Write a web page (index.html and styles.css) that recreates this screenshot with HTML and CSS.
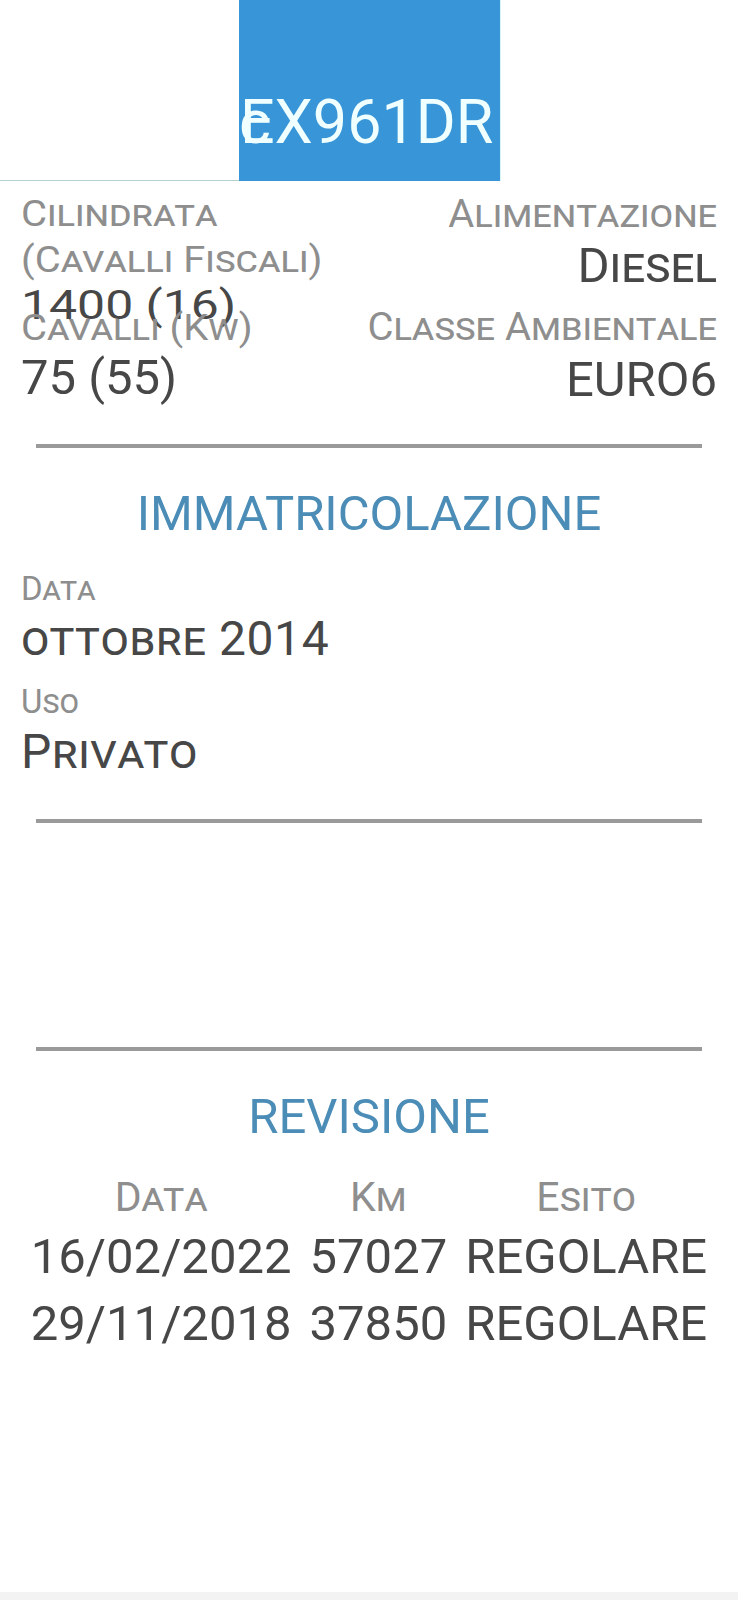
FILE: index.html
```html
<!DOCTYPE html>
<html lang="it">
<head>
    <meta charset="UTF-8">
    <meta name="viewport" content="width=device-width, initial-scale=1.0">
    <title>Dettaglio veicolo</title>
    <link rel="stylesheet" href="styles.css">
</head>
<body>
<div class="page">

    <header class="plate-bar">
        <div class="plate-rule"></div>
        <div class="plate"><span class="plate-ghost">c</span>EX961DR</div>
    </header>

    <section class="specs">
        <div class="spec-col">
            <div class="spec-lbl">Cilindrata<br>(Cavalli Fiscali)</div>
            <div class="spec-val squash">1400 (16)</div>
            <div class="spec-lbl">Cavalli (Kw)</div>
            <div class="spec-val power">75 (55)</div>
        </div>
        <div class="spec-col right">
            <div class="spec-lbl fuel-lbl">Alimentazione</div>
            <div class="spec-val fuel">Diesel</div>
            <div class="spec-lbl class-lbl">Classe Ambientale</div>
            <div class="spec-val euro">EURO6</div>
        </div>
    </section>

    <div class="divider"></div>

    <section class="section">
        <h2 class="section-title">IMMATRICOLAZIONE</h2>
        <div class="fields">
            <div class="field">
                <div class="field-lbl">Data</div>
                <div class="field-val">ottobre 2014</div>
            </div>
            <div class="field">
                <div class="field-lbl">Uso</div>
                <div class="field-val">Privato</div>
            </div>
        </div>
    </section>

    <div class="divider after-fields"></div>

    <!-- sezione vuota -->
    <section class="section empty"></section>

    <div class="divider flush"></div>

    <section class="section">
        <h2 class="section-title">REVISIONE</h2>
        <table class="revisions">
            <tr><th>Data</th><th>Km</th><th>Esito</th></tr>
            <tr><td>16/02/2022</td><td>57027</td><td>REGOLARE</td></tr>
            <tr><td>29/11/2018</td><td>37850</td><td>REGOLARE</td></tr>
        </table>
    </section>

    <div class="nav-strip"></div>
</div>
</body>
</html>
```

FILE: styles.css
```css
body {
    margin: 0;
    font-family: Roboto, "Noto Sans", "Liberation Sans", sans-serif;
    color: #474747;
    background: #fff;
}
.page {
    min-height: 100vh;
    display: flex;
    flex-direction: column;
}

/* targa */
.plate-bar {
    display: flex;
    height: 181px;
}
.plate-rule {
    width: 239px;
    border-bottom: 1px solid #b3d0d3;
}
.plate {
    width: 262px;
    box-sizing: border-box;
    padding-top: 92px;
    background: #3896d8;
    border-right: 1px solid #d9f4f7;
    color: #f0ffff;
    font-size: 61px;
    line-height: 61px;
    white-space: nowrap;
}
.plate-ghost {
    margin-right: -31px;
}

/* dati tecnici */
.specs {
    display: grid;
    grid-template-columns: 1fr 1fr;
    padding: 10px 21px 0 21px;
}
.spec-col.right {
    text-align: right;
}
.spec-lbl {
    font-size: 37px;
    line-height: 46px;
    color: #8e8e8e;
    font-variant: small-caps;
    white-space: nowrap;
    transform: scaleX(1.08);
    transform-origin: left;
}
.spec-col.right .spec-lbl {
    transform: scaleX(1.05);
    transform-origin: right;
}
.spec-val {
    font-size: 49px;
    line-height: 53px;
}
.spec-val.squash {
    height: 22px;
    font-size: 48px;
    line-height: 40px;
    transform: scale(1.04, 0.85);
    transform-origin: 0 36px;
}
.fuel-lbl {
    font-size: 38px;
}
.spec-val.fuel {
    line-height: 58px;
    font-variant: small-caps;
}
.class-lbl {
    font-size: 38px;
    line-height: 64px;
}
.spec-val.euro {
    line-height: 41px;
}

.divider {
    height: 4px;
    margin: 40px 36px 0;
    background: #9a9a9a;
}
.divider.after-fields {
    margin-top: 39px;
}
.divider.flush {
    margin-top: 0;
}

.section-title {
    margin: 36px 0 0;
    font-size: 49px;
    line-height: 60px;
    font-weight: normal;
    text-align: center;
    color: #4b8db6;
}
.section.empty {
    height: 224px;
}

/* immatricolazione */
.fields {
    padding: 23px 23px 0 21px;
}
.field + .field {
    margin-top: 13px;
}
.field-lbl {
    font-size: 33px;
    line-height: 44px;
    color: #8e8e8e;
    font-variant: small-caps;
}
.field-val {
    font-size: 48px;
    line-height: 56px;
    letter-spacing: 0.6px;
    font-variant: small-caps;
}

/* revisione */
.revisions {
    margin: 24px auto 0;
    border-collapse: collapse;
}
.revisions th,
.revisions td {
    padding: 0 9px;
    text-align: center;
    white-space: nowrap;
}
.revisions th {
    font-size: 41px;
    line-height: 52px;
    font-weight: normal;
    font-variant: small-caps;
    color: #8e8e8e;
}
.revisions td {
    font-size: 49px;
    line-height: 67px;
}

.nav-strip {
    margin-top: auto;
    height: 8px;
    background: #f3f3f3;
}
```
